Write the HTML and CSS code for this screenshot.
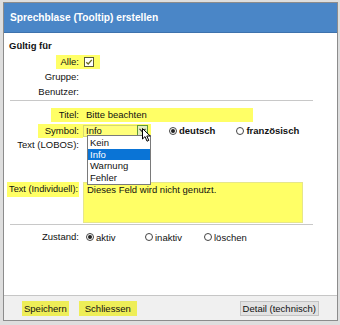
FILE: index.html
```html
<!DOCTYPE html>
<html lang="de">
<head>
    <meta charset="UTF-8">
    <title>Sprechblase (Tooltip) erstellen</title>
    <link rel="stylesheet" href="styles.css">
</head>
<body>
    <!-- Dialog -->
    <div class="dlg">
        <div class="head">Sprechblase (Tooltip) erstellen</div>

        <div class="content">
            <div class="sect">Gültig für</div>

            <div class="row">
                <div class="lbl"><span class="hl pad5">Alle:</span></div>
                <span class="hl chkwrap">
                    <svg class="chk" width="10" height="10" viewBox="0 0 10 10">
                        <rect x="0.5" y="0.5" width="9" height="9" fill="#fff" stroke="#5a5a3a"/>
                        <path d="M2.3 5.2 L4.2 7 L7.8 2.8" fill="none" stroke="#6a6a20" stroke-width="1.3"/>
                    </svg>
                </span>
            </div>
            <div class="row">
                <div class="lbl"><span>Gruppe:</span></div>
            </div>
            <div class="row">
                <div class="lbl"><span>Benutzer:</span></div>
            </div>

            <div class="line"></div>

            <div class="row titel">
                <div class="lbl"><span class="hl pad8">Titel:</span></div>
                <div class="inp hl">Bitte beachten</div>
            </div>

            <div class="row symbol">
                <div class="lbl"><span class="hl pad7">Symbol:</span></div>
                <span class="hl selwrap">
                    <span class="sel">Info<span class="arr">
                        <svg width="7" height="5" viewBox="0 0 7 5"><path d="M0.5 0.8 L3.5 4 L6.5 0.8" fill="none" stroke="#333" stroke-width="1.1"/></svg>
                    </span></span>
                </span>
                <span class="radio on"></span><b class="rtxt">deutsch</b>
                <span class="radio fr"></span><b class="rtxt">französisch</b>

                <!-- aufgeklappte Liste -->
                <ul class="list">
                    <li>Kein</li>
                    <li class="act">Info</li>
                    <li>Warnung</li>
                    <li>Fehler</li>
                </ul>
                <svg class="cursor" width="10" height="15" viewBox="0 0 10 15">
                    <path d="M0.5 0.5 L0.5 11 L3 8.6 L5 13.2 L6.8 12.4 L4.8 8 L8.2 8 Z" fill="#fff" stroke="#000" stroke-width="1"/>
                </svg>
            </div>

            <div class="row">
                <div class="lbl"><span>Text (LOBOS):</span></div>
            </div>

            <div class="row indiv">
                <div class="lbl"><span class="hl indlbl">Text (Individuell):</span></div>
                <div class="area hl">Dieses Feld wird nicht genutzt.</div>
            </div>

            <div class="line"></div>

            <div class="row zustand">
                <div class="lbl"><span>Zustand:</span></div>
                <span class="radio on"></span><span class="rtxt w1">aktiv</span>
                <span class="radio"></span><span class="rtxt w1">inaktiv</span>
                <span class="radio"></span><span class="rtxt">löschen</span>
            </div>
        </div>

        <div class="foot">
            <span class="btn yel b1">Speichern</span>
            <span class="btn yel b2">Schliessen</span>
            <span class="btn grey">Detail (technisch)</span>
        </div>
    </div>
</body>
</html>
```

FILE: styles.css
```css
*{
    margin: 0;
    padding: 0;
    box-sizing: border-box;
}
body{
    background: #dedede;
    font-family: "Liberation Sans", Arial, sans-serif;
    font-size: 9.5px;
    color: #111;
}
.dlg{
    width: 335px;
    margin: 2px 0 0 3px;
    border: 1px solid #8c8c8c;
    background: #fff;
}
.head{
    height: 30px;
    line-height: 29px;
    padding-left: 6px;
    background: #4a86c7;
    color: #fff;
    font-weight: bold;
    font-size: 10.2px;
    border-bottom: 1px solid #3e72ad;
}
.content{
    height: 262px;
    padding-top: 6px;
    position: relative;
}
.sect{
    font-weight: bold;
    height: 14px;
    line-height: 14px;
    padding-left: 5px;
    margin-bottom: 1px;
}
.row{
    display: flex;
    align-items: center;
    height: 15px;
}
.lbl{
    width: 79px;
    flex-shrink: 0;
    text-align: right;
    white-space: nowrap;
}
.lbl span{
    display: inline-block;
    padding-right: 4px;
    line-height: 14px;
}
.hl{
    background: #ffff66;
}
.pad5{ padding-left: 5px; }
.pad7{ padding-left: 7px; }
.pad8{ padding-left: 8px; }

.chkwrap{
    height: 14px;
    width: 17px;
    display: flex;
    align-items: center;
    padding-left: 1px;
}
.line{
    height: 1px;
    background: #c8c8c8;
    margin: 1px 0 0 6px;
    width: 303px;
}
.titel{
    margin-top: 7px;
    height: 14px;
}
.inp{
    width: 170px;
    height: 14px;
    line-height: 14px;
    padding-left: 3px;
}
.symbol{
    margin-top: 2px;
    height: 13px;
    position: relative;
}
.selwrap{
    height: 13px;
    padding-right: 3px;
    display: flex;
    align-items: center;
}
.sel{
    display: flex;
    align-items: center;
    justify-content: space-between;
    width: 65px;
    height: 12px;
    padding-left: 2px;
    background: #ffff7a;
    border: 1px solid #d8d870;
    border-right: none;
}
.arr{
    width: 11px;
    height: 12px;
    border: 1px solid #5f9a35;
    background: #e4eec0;
    display: flex;
    align-items: center;
    justify-content: center;
}
.radio{
    width: 8px;
    height: 8px;
    border: 1px solid #444;
    border-radius: 50%;
    background: #fff;
    margin-left: 18px;
    position: relative;
    flex-shrink: 0;
}
.radio.on::after{
    content: "";
    position: absolute;
    left: 1px;
    top: 1px;
    width: 4px;
    height: 4px;
    border-radius: 50%;
    background: #222;
}
.radio.fr{ margin-left: 21px; }
.rtxt{
    margin-left: 2px;
}
.list{
    position: absolute;
    left: 83px;
    top: 11px;
    width: 64px;
    list-style: none;
    background: #fff;
    border: 1px solid #7a7a7a;
    padding: 1px 0;
    z-index: 2;
}
.list li{
    height: 11.5px;
    line-height: 11.5px;
    padding-left: 2px;
}
.list .act{
    background: #0a74d6;
    color: #fff;
}
.cursor{
    position: absolute;
    left: 138px;
    top: 4px;
    z-index: 3;
}
.indiv{
    margin-top: 30px;
    height: 41px;
    align-items: flex-start;
}
.lbl .indlbl{
    line-height: 15px;
    padding: 0 1px 0 2px;
    margin-right: 4px;
    font-size: 9.2px;
}
.area{
    width: 220px;
    height: 41px;
    padding: 1px 3px;
    border: 1px solid #e6e68a;
    line-height: 12px;
}
.line + .zustand{
    margin-top: 5px;
    height: 14px;
}
.zustand .radio{
    margin-left: 3px;
}
.zustand .w1{
    width: 46px;
}
.foot{
    height: 25px;
    border-top: 1px solid #c6c6c6;
    background: #f0f0f0;
    display: flex;
    align-items: center;
    padding: 0 18px 0 18px;
}
.btn{
    height: 15px;
    line-height: 15px;
    display: inline-block;
}
.yel{
    background: #eeee58;
}
.b1{
    padding: 0 2px;
}
.b2{
    margin-left: 10px;
    padding: 0 6px;
}
.grey{
    margin-left: auto;
    background: #e2e2e2;
    border: 1px solid #c4c4c4;
    line-height: 13px;
    padding: 0 2px;
}
```
